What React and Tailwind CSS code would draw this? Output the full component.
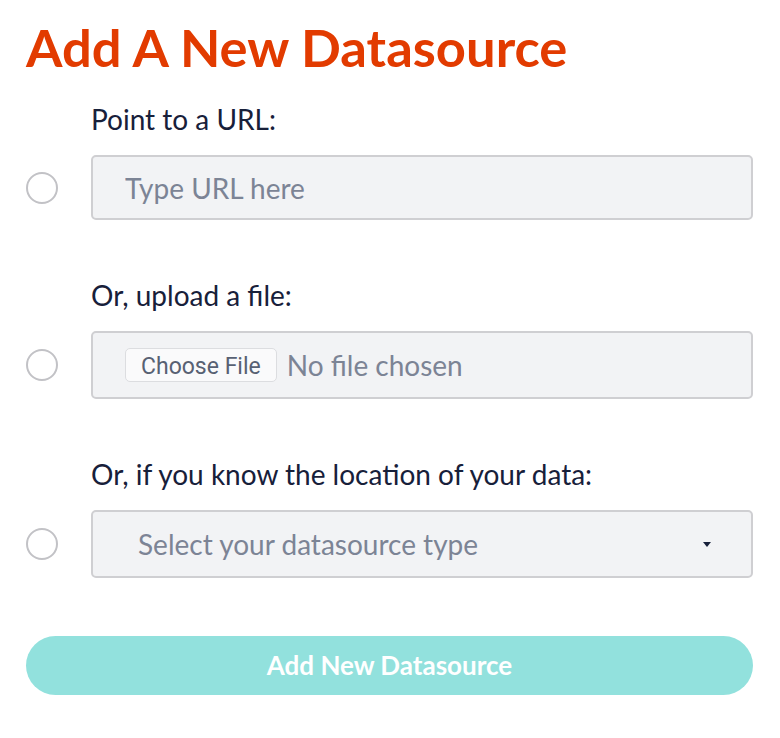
import React, { useState } from 'react';

const Radio = ({ checked, onClick }) => (
  <button
    type="button"
    onClick={onClick}
    className="w-[32px] h-[32px] rounded-full border-2 border-[#c2c2c6] bg-white flex items-center justify-center"
  >
    {checked && <span className="w-[14px] h-[14px] rounded-full bg-[#e23b00]" />}
  </button>
);

const Section = ({ label, checked, onSelect, children, className = '' }) => (
  <div className={`grid grid-cols-[65px_1fr] ${className}`}>
    <div />
    <label className="text-[28px] leading-[36px] text-[#17203a]">{label}</label>
    <div className="flex items-center mt-[18px]">
      <Radio checked={checked} onClick={onSelect} />
    </div>
    <div className="mt-[18px]">{children}</div>
  </div>
);

export default function App() {
  const [choice, setChoice] = useState(null);

  return (
    <div className="min-h-screen bg-white pl-[26px] pr-[27px] pt-[15px] font-['Lato','Open_Sans',sans-serif]">
      <h1 className="text-[52.5px] leading-[64px] font-bold text-[#e23b00]">
        Add A New Datasource
      </h1>

      <Section
        label="Point to a URL:"
        checked={choice === 'url'}
        onSelect={() => setChoice('url')}
        className="mt-[22px]"
      >
        <input
          type="text"
          placeholder="Type URL here"
          className="w-full h-[65px] rounded-[5px] border-2 border-[#cfcfd2] bg-[#f2f3f5] px-[32px] text-[28px] text-[#17203a] placeholder:text-[#7c8495] outline-none"
        />
      </Section>

      <Section
        label="Or, upload a file:"
        checked={choice === 'file'}
        onSelect={() => setChoice('file')}
        className="mt-[57px]"
      >
        <div className="w-full h-[68px] rounded-[5px] border-2 border-[#cfcfd2] bg-[#f2f3f5] pl-[32px] flex items-center gap-[10px]">
          <button
            type="button"
            className="h-[34px] px-[15px] pt-[2px] rounded-[5px] border border-[#dcdde0] bg-[#fafafb] text-[23px] text-[#586173] font-['Roboto','Open_Sans',sans-serif] leading-none"
          >
            Choose File
          </button>
          <span className="text-[28px] text-[#7c8495]">No file chosen</span>
        </div>
      </Section>

      <Section
        label="Or, if you know the location of your data:"
        checked={choice === 'type'}
        onSelect={() => setChoice('type')}
        className="mt-[57px]"
      >
        <div className="w-full h-[68px] rounded-[5px] border-2 border-[#cfcfd2] bg-[#f2f3f5] pl-[45px] pr-[40px] flex items-center justify-between">
          <span className="text-[28px] text-[#7c8495]">Select your datasource type</span>
          <svg width="8" height="5" viewBox="0 0 8 5" className="text-[#17203a]">
            <path d="M0 0h8L4 5z" fill="currentColor" />
          </svg>
        </div>
      </Section>

      <button
        type="button"
        className="mt-[58px] w-full h-[59px] rounded-full bg-[#92e1dd] text-white text-[26px] font-bold"
      >
        Add New Datasource
      </button>
    </div>
  );
}
